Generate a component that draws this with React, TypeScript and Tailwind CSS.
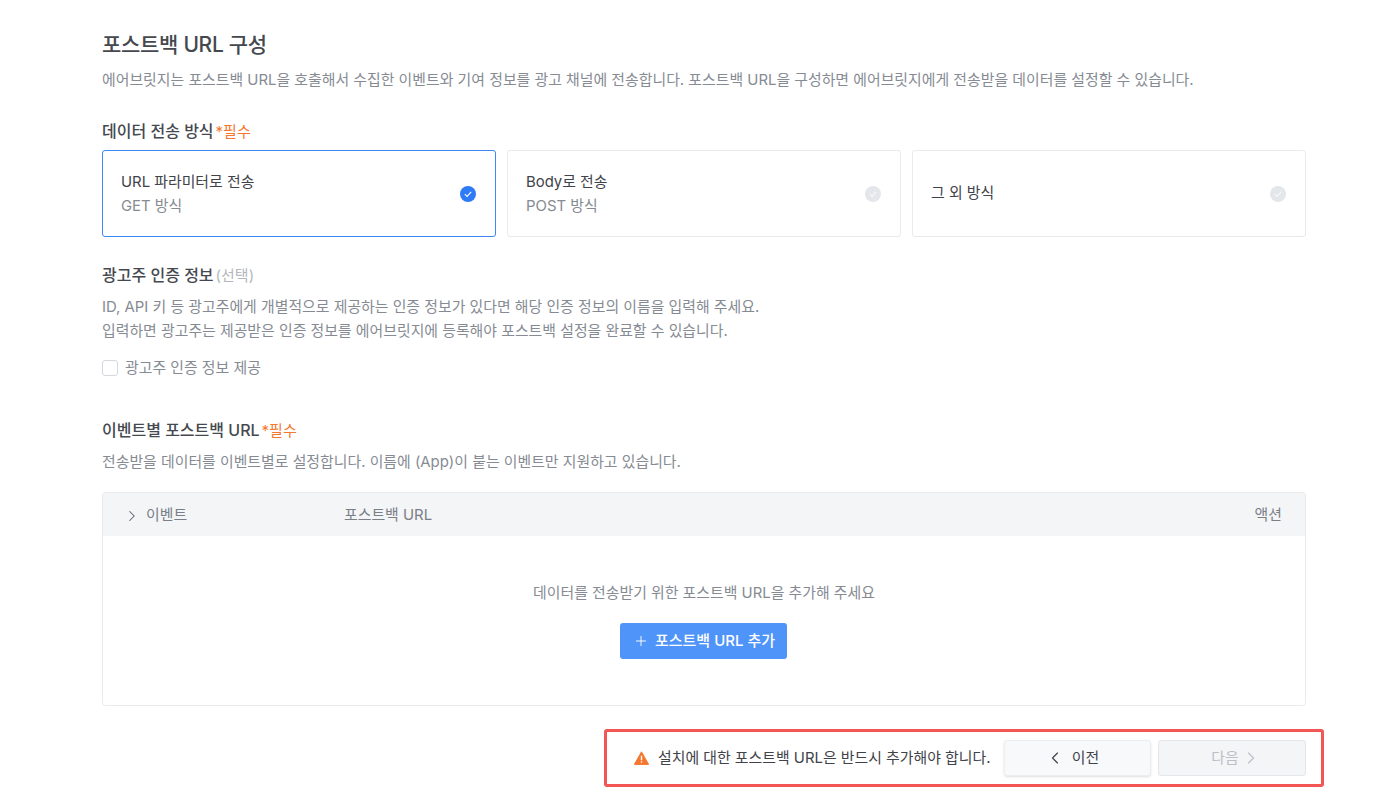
import React from "react";
import { ChevronLeft, ChevronRight, Plus } from "lucide-react";

function Check({ on }: { on: boolean }) {
  return (
    <svg width="16" height="16" viewBox="0 0 16 16" className="shrink-0">
      <circle cx="8" cy="8" r="8" fill={on ? "#2f7bf6" : "#e3e6ea"} />
      <path d="M4.8 8.2 7.1 10.4 11.2 5.8" fill="none" stroke={on ? "#ffffff" : "#f8f9fa"} strokeWidth="1.1" />
    </svg>
  );
}

function Option({ title, sub, on }: { title: string; sub?: string; on?: boolean }) {
  return (
    <div className={`h-[87px] flex-1 rounded-[3px] flex items-center justify-between pl-[18px] pr-[19px] border ${on ? "border-[#3d86f5]" : "border-[#e8eaed]"}`}>
      <div className={`flex flex-col gap-[3px] ${sub ? "pt-[2px]" : ""}`}>
        <div className="text-[14.9px] leading-[21px] text-[#3f434a]">{title}</div>
        {sub && <div className="text-[14.9px] leading-[21px] text-[#868b93]">{sub}</div>}
      </div>
      <Check on={!!on} />
    </div>
  );
}

function Req() {
  return <span className="text-[15px] font-normal text-[#f5772f] ml-[2px]">*필수</span>;
}

export default function App() {
  return (
    <div
      className="relative w-[1400px] h-[800px] overflow-hidden bg-white pl-[102px] pr-[94px] pt-[30px]"
      style={{ fontFamily: '"Inter", "Noto Sans CJK KR", sans-serif' }}
    >
      <h1 className="text-[21px] leading-[30px] font-medium tracking-[-0.3px] text-[#45494f]">포스트백 URL 구성</h1>
      <p className="mt-[10px] text-[14.9px] leading-[21px] text-[#868b93] whitespace-nowrap">
        에어브릿지는 포스트백 URL을 호출해서 수집한 이벤트와 기여 정보를 광고 채널에 전송합니다. 포스트백 URL을 구성하면 에어브릿지에게 전송받을 데이터를 설정할 수 있습니다.
      </p>

      <div className="mt-[29px] text-[16px] leading-[22px] font-medium text-[#45494f]">
        데이터 전송 방식<Req />
      </div>
      <div className="mt-[7px] flex gap-[11px]">
        <Option title="URL 파라미터로 전송" sub="GET 방식" on />
        <Option title="Body로 전송" sub="POST 방식" />
        <Option title="그 외 방식" />
      </div>

      <div className="mt-[27px] text-[16px] leading-[22px] font-medium text-[#45494f]">
        광고주 인증 정보<span className="text-[15px] font-normal text-[#b4b8be] ml-[2px]">(선택)</span>
      </div>
      <p className="mt-[8px] text-[14.9px] leading-[24px] text-[#868b93] whitespace-nowrap">
        ID, API 키 등 광고주에게 개별적으로 제공하는 인증 정보가 있다면 해당 인증 정보의 이름을 입력해 주세요.
        <br />
        입력하면 광고주는 제공받은 인증 정보를 에어브릿지에 등록해야 포스트백 설정을 완료할 수 있습니다.
      </p>
      <label className="mt-[14px] flex items-center gap-[7px] h-[22px]">
        <span className="w-[16px] h-[16px] rounded-[3px] border border-[#d5d8dd] bg-white" />
        <span className="text-[14.9px] text-[#868b93]">광고주 인증 정보 제공</span>
      </label>

      <div className="mt-[40px] text-[16px] leading-[22px] font-medium text-[#45494f]">
        이벤트별 포스트백 URL<Req />
      </div>
      <p className="mt-[10px] text-[14.9px] leading-[21px] text-[#868b93] whitespace-nowrap">
        전송받을 데이터를 이벤트별로 설정합니다. 이름에 (App)이 붙는 이벤트만 지원하고 있습니다.
      </p>

      <div className="mt-[19px] h-[214px] rounded-[3px] border border-[#e8eaed] flex flex-col">
        <div className="h-[43px] pt-[2px] bg-[#f4f5f7] flex items-center text-[14.9px] text-[#7a7f87] pr-[23px]">
          <ChevronRight size={18} strokeWidth={1.4} className="ml-[20px] mr-[5px] text-[#5c6068]" />
          <span className="w-[198px]">이벤트</span>
          <span>포스트백 URL</span>
          <span className="ml-auto">액션</span>
        </div>
        <div className="flex-1 flex flex-col items-center pt-[46px]">
          <div className="text-[14.9px] leading-[22px] text-[#868b93]">데이터를 전송받기 위한 포스트백 URL을 추가해 주세요</div>
          <button className="mt-[19px] mr-[2px] pl-[2px] w-[167px] h-[36px] rounded-[3px] bg-[#4f94f8] text-white text-[15px] font-medium flex items-center justify-center gap-[6px]">
            <Plus size={16} strokeWidth={1.4} />
            포스트백 URL 추가
          </button>
        </div>
      </div>

      <div className="absolute left-[604px] top-[729px] w-[720px] h-[58px] rounded-[3px] border-[3px] border-[#f45555] flex items-center pl-[27px] pr-[15px]">
        <svg width="15" height="14" viewBox="0 0 15 14" className="shrink-0">
          <path d="M7.5 0.8 14.6 13.4H0.4Z" fill="#f5772f" stroke="#f5772f" strokeLinejoin="round" />
          <rect x="6.8" y="4.8" width="1.4" height="4.4" fill="#fff" />
          <rect x="6.8" y="10.2" width="1.4" height="1.4" fill="#fff" />
        </svg>
        <span className="ml-[9px] text-[14.9px] text-[#3f434a] whitespace-nowrap">설치에 대한 포스트백 URL은 반드시 추가해야 합니다.</span>
        <button className="ml-auto w-[147px] h-[36px] pr-[11px] rounded-[3px] border border-[#eceef0] bg-[#f8f9fa] shadow-sm flex items-center justify-center gap-[7px] text-[14.9px] text-[#3f434a]">
          <ChevronLeft size={20} strokeWidth={1.4} />
          이전
        </button>
        <button className="ml-[7px] w-[148px] h-[36px] pl-[8px] rounded-[3px] border border-[#e3e6ea] bg-[#f4f5f7] flex items-center justify-center gap-[2px] text-[14.9px] text-[#bcc0c6]">
          다음
          <ChevronRight size={20} strokeWidth={1.4} />
        </button>
      </div>
    </div>
  );
}
